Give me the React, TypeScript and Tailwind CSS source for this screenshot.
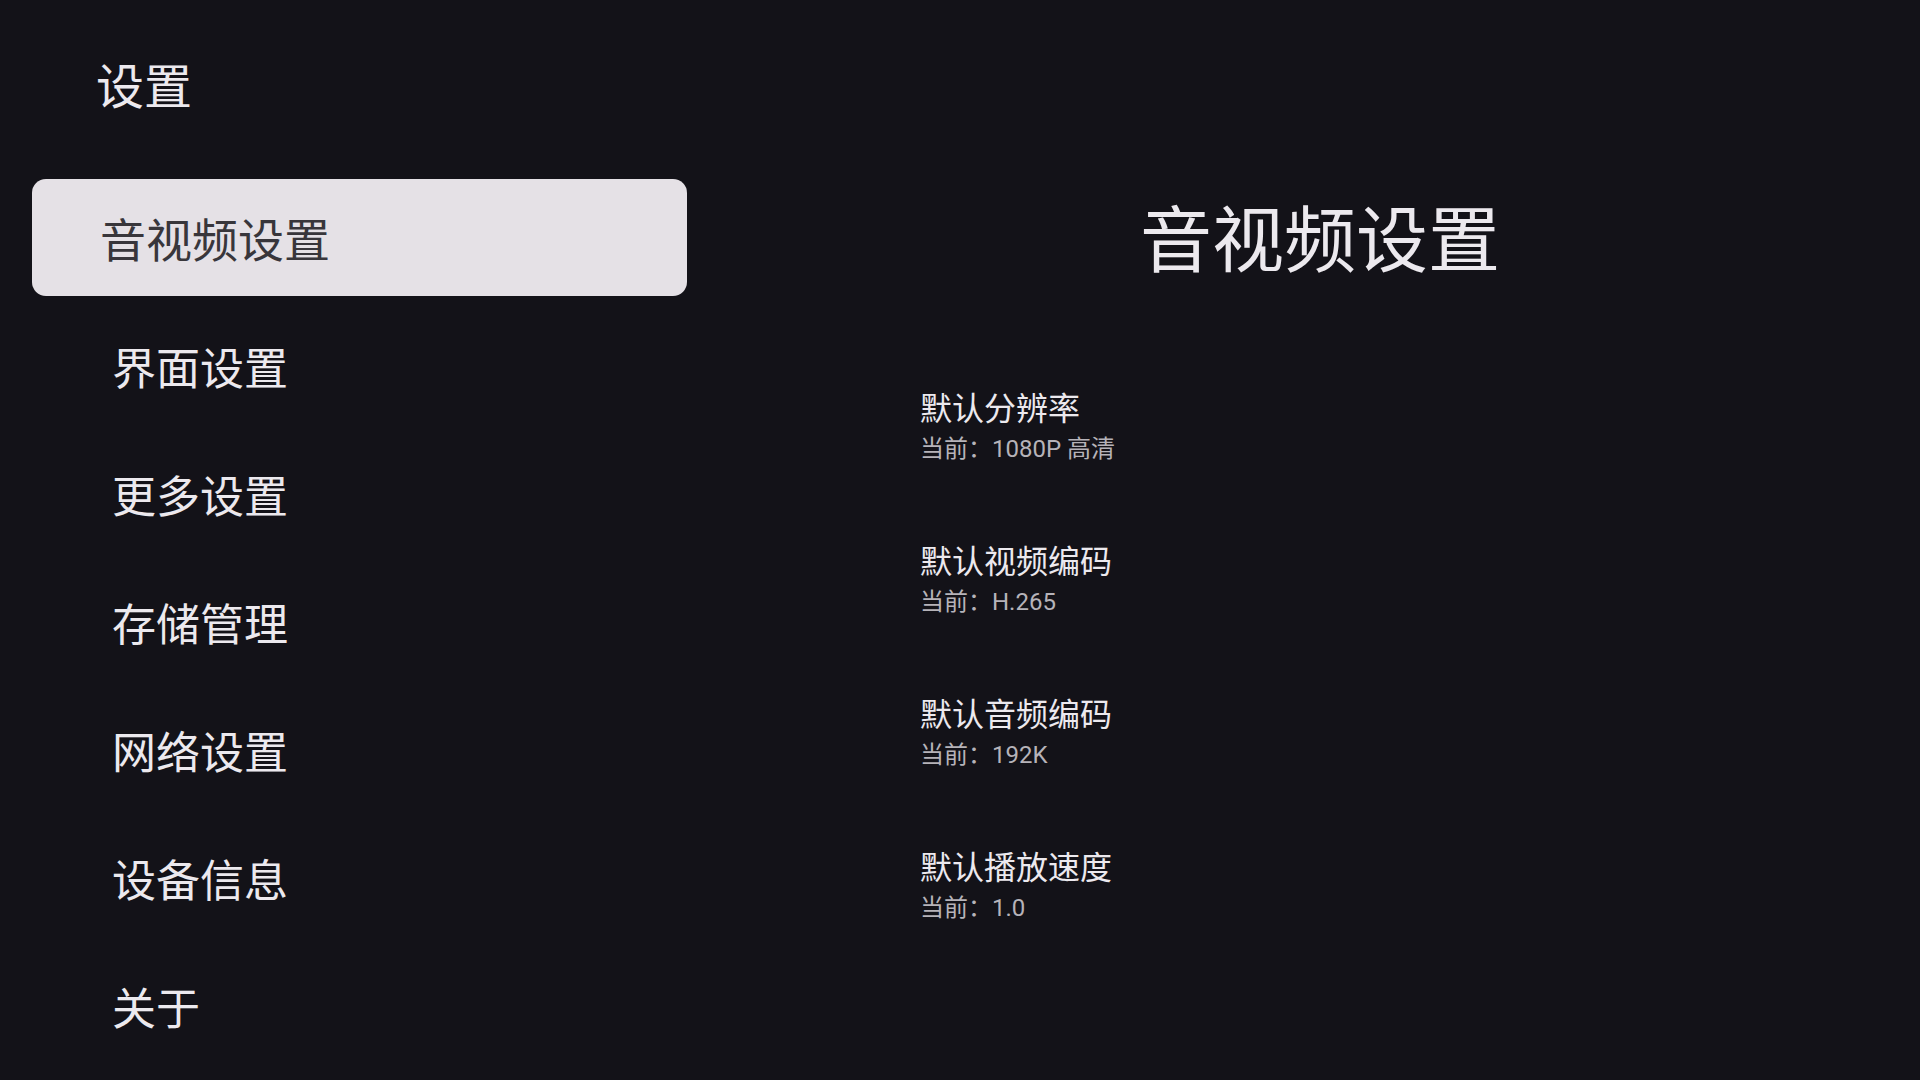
const FONT = "font-['Roboto','Noto_Sans_CJK_SC',sans-serif]";

const MENU = ["音视频设置", "界面设置", "更多设置", "存储管理", "网络设置", "设备信息", "关于"];

const OPTIONS = [
  { title: "默认分辨率", value: "当前：1080P 高清" },
  { title: "默认视频编码", value: "当前：H.265" },
  { title: "默认音频编码", value: "当前：192K" },
  { title: "默认播放速度", value: "当前：1.0" },
];

export default function App() {
  const selected = 0;

  return (
    <div className={`flex h-[1080px] w-[1920px] overflow-hidden bg-[#131218] ${FONT}`}>
      <div className="flex w-[720px] flex-col pl-[32px]">
        <h1 className="mt-[59px] pl-[64px] text-[48px] leading-[58px] font-normal text-[#ece9ee]">设置</h1>
        <nav className="mt-[62px] flex w-[655px] flex-col gap-[11px]">
          {MENU.map((label, i) =>
            i === selected ? (
              <div
                key={label}
                className="flex h-[117px] items-center rounded-[14px] bg-[#e5e1e6] pt-[7px] pl-[68px] text-[46px] text-[#38363b]"
              >
                {label}
              </div>
            ) : (
              <div key={label} className="flex h-[117px] items-center pt-[8px] pl-[80px] text-[44px] text-[#ece9ee]">
                {label}
              </div>
            )
          )}
        </nav>
      </div>

      <div className="flex flex-1 flex-col">
        <div className="mt-[179px] flex h-[117px] items-center justify-center pt-[8px]">
          <h2 className="text-[72px] leading-none font-normal text-[#ece9ee]">音视频设置</h2>
        </div>
        <div className="mt-[92px] flex flex-col gap-[80px] pl-[200px]">
          {OPTIONS.map((o) => (
            <div key={o.title} className="flex flex-col">
              <span className="text-[32px] leading-[42px] text-[#ece9ee]">{o.title}</span>
              <span className="mt-[7px] text-[24px] leading-[24px] text-[#b6b3b9]">{o.value}</span>
            </div>
          ))}
        </div>
      </div>
    </div>
  );
}
